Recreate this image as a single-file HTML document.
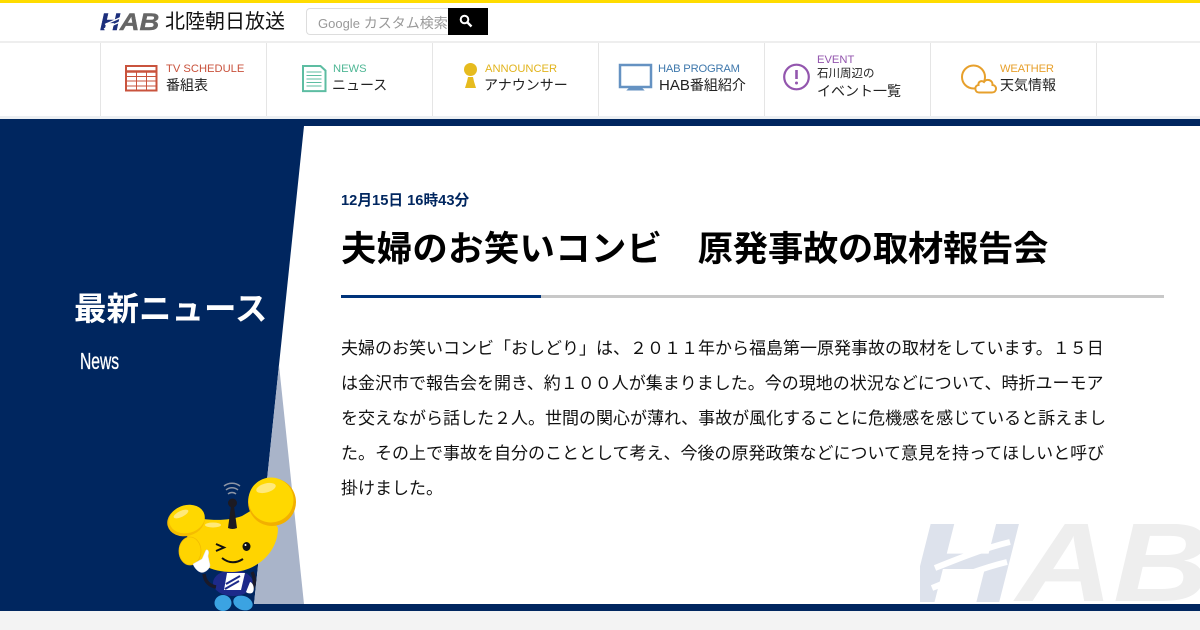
<!DOCTYPE html>
<html lang="ja">
<head>
<meta charset="utf-8">
<title>夫婦のお笑いコンビ　原発事故の取材報告会</title>
<style>
html,body{margin:0;padding:0;width:1200px;height:630px;overflow:hidden;background:#f3f3f3}
body{position:relative;font-family:"Liberation Sans","Noto Sans CJK JP",sans-serif;color:#000}
.a{position:absolute;white-space:nowrap}
.en{font-size:11.2px;line-height:14px}
.ja{font-size:14px;line-height:18px;color:#222}
</style>
</head>
<body>
<div class="a" style="left:0;top:0;width:1200px;height:3px;background:#ffdc00"></div>
<div class="a" style="left:0;top:3px;width:1200px;height:38px;background:#fff"></div>
<div class="a" style="left:0;top:41px;width:1200px;height:2px;background:#eee"></div>
<div class="a" style="left:0;top:43px;width:1200px;height:73px;background:#fff"></div>
<div class="a" style="left:0;top:116px;width:1200px;height:3px;background:#eceff2"></div>

<!-- logo -->
<div class="a" style="left:100px;top:9px;font:italic bold 24px/28px 'Liberation Sans',sans-serif;color:#1c2f7c;-webkit-text-stroke:.4px;transform:scaleX(1.140);transform-origin:0 0">H<span style="color:#666">AB</span></div>
<svg class="a" style="left:100px;top:12px" width="30" height="20" fill="none"><path d="M5 12.500L22 5M4 17L21 9.500" stroke="#fff" stroke-width="1.500"/></svg>
<div class="a" style="left:165px;top:9px;font-size:20px;line-height:26px;color:#111">北陸朝日放送</div>

<!-- search -->
<div class="a" style="left:306px;top:8px;width:142px;height:25px;border:1px solid #ddd;border-right:0;border-radius:4px 0 0 4px;background:#fff"></div>
<div class="a" style="left:318px;top:13px;width:130px;overflow:hidden;font-size:14px;line-height:20px;color:#999"><span style="font-size:13px">Google</span> カスタム検索</div>
<div class="a" style="left:448px;top:8px;width:40px;height:27px;background:#000"></div>
<svg class="a" style="left:458px;top:13px" width="16" height="16" viewBox="0 0 16 16"><circle cx="6.500" cy="6.500" r="3.800" fill="none" stroke="#fff" stroke-width="2"/><path d="M9.500 9.500L13.500 13.500" stroke="#fff" stroke-width="2.400"/></svg>

<!-- nav dividers -->
<div class="a" style="left:100px;top:43px;width:1px;height:73px;background:#e5e5e5"></div>
<div class="a" style="left:266px;top:43px;width:1px;height:73px;background:#e5e5e5"></div>
<div class="a" style="left:432px;top:43px;width:1px;height:73px;background:#e5e5e5"></div>
<div class="a" style="left:598px;top:43px;width:1px;height:73px;background:#e5e5e5"></div>
<div class="a" style="left:764px;top:43px;width:1px;height:73px;background:#e5e5e5"></div>
<div class="a" style="left:930px;top:43px;width:1px;height:73px;background:#e5e5e5"></div>
<div class="a" style="left:1096px;top:43px;width:1px;height:73px;background:#e5e5e5"></div>

<!-- nav icons -->
<svg class="a" style="left:0;top:0" width="1200" height="120" fill="none">
<g stroke="#c9533d"><rect x="126" y="66" width="30.500" height="24.500" stroke-width="2"/><path d="M126 71.500h30" stroke-width="2.500"/><path d="M126 76.500h30M126 81h30M126 86h30M136.500 72v18M146.500 72v18" stroke-width="1"/></g>
<g stroke="#5dbda2" stroke-width="2"><path d="M303 66h17.500l5 4.600v20.500H303z"/><path d="M306.500 72h15M306.500 75.500h15M306.500 79h15M306.500 82.500h15M306.500 86h15" stroke-width="1.100"/></g>
<circle cx="470.500" cy="69.500" r="6.500" fill="#e6bb1e"/><path d="M468 77h5l1 4.500 2 6.500h-11l2-6.500z" fill="#e6bb1e"/>
<g stroke="#6592c2"><rect x="620" y="65" width="31" height="22" stroke-width="2.500"/><path d="M629 88.500h13l1.500 1.500h-16z" fill="#6592c2" stroke-width="1"/></g>
<circle cx="796.500" cy="77" r="12.300" stroke="#9356ae" stroke-width="2.200"/><path d="M796.500 70v9" stroke="#9356ae" stroke-width="2.600"/><circle cx="796.500" cy="83" r="1.500" fill="#9356ae"/>
<g stroke="#e7a02c" stroke-width="2"><circle cx="973.500" cy="77" r="11.500"/><path d="M979 92.500h13c5 0 5.500-7 .5-7.500c.5-5-6-7-8.500-3c-3-2-6 0-5.500 3c-4.500 .5-4 7.500 .5 7.500z" fill="#fff"/></g>
</svg>

<!-- nav text -->
<div class="a en" style="left:166px;top:62px;color:#c9533d">TV SCHEDULE</div>
<div class="a ja" style="left:166px;top:76px">番組表</div>
<div class="a en" style="left:333px;top:62px;color:#4fb795">NEWS</div>
<div class="a ja" style="left:332px;top:76px">ニュース</div>
<div class="a en" style="left:485px;top:62px;color:#e2b41e">ANNOUNCER</div>
<div class="a ja" style="left:484px;top:76px">アナウンサー</div>
<div class="a en" style="left:658px;top:62px;color:#3f78ac;letter-spacing:-.2px">HAB PROGRAM</div>
<div class="a ja" style="left:659px;top:76px"><span style="font-size:15px">HAB</span>番組紹介</div>
<div class="a en" style="left:817px;top:53px;color:#9356ae">EVENT</div>
<div class="a" style="left:817px;top:67px;font-size:11.500px;line-height:15px;color:#222">石川周辺の</div>
<div class="a ja" style="left:817px;top:82px">イベント一覧</div>
<div class="a en" style="left:1000px;top:62px;color:#e7a02c;letter-spacing:-.2px">WEATHER</div>
<div class="a ja" style="left:1000px;top:76px">天気情報</div>

<!-- main -->
<div class="a" style="left:0;top:119px;width:1200px;height:492px;background:#00265f"></div>
<svg class="a" style="left:0;top:126px" width="1200" height="478">
<polygon points="304,0 1200,0 1200,478 254,478" fill="#fff"/>
<polygon points="279,239 304,478 254,478" fill="#a9b4c9"/>
</svg>

<!-- watermark -->
<div class="a" style="left:920px;top:524px;width:280px;height:80px;overflow:hidden">
<div class="a" style="left:-10px;top:-28px;font:italic bold 112px/134px 'Liberation Sans',sans-serif;color:#dde2ec;-webkit-text-stroke:2px #dde2ec;transform:scaleX(1.300);transform-origin:0 0">H</div>
<svg class="a" style="left:0;top:0" width="110" height="80" fill="none"><path d="M15 44C40 34 65 24 90 18M12 64C37 54 62 44 87 38" stroke="#fff" stroke-width="6"/></svg>
<div class="a" style="left:96px;top:-28px;font:italic bold 112px/134px 'Liberation Sans',sans-serif;color:#eeeeee;transform:scaleX(1.200);transform-origin:0 0">AB</div>
</div>

<!-- left heading -->
<div class="a" style="left:74px;top:288px;font-size:32.500px;line-height:42px;color:#fff;font-weight:bold">最新ニュース</div>
<div class="a" style="left:80px;top:347px;font-size:23px;line-height:28px;color:#fff;-webkit-text-stroke:.3px #fff;transform:scaleX(.68);transform-origin:0 0">News</div>

<!-- article -->
<div class="a" style="left:341px;top:191px;font-size:14.700px;line-height:20px;font-weight:bold;color:#00265f">12月15日 16時43分</div>
<div class="a" style="left:341px;top:227px;font-size:35.360px;line-height:46px;font-weight:bold;color:#000"><span style="letter-spacing:.35px">夫婦のお笑いコンビ</span>　<span style="letter-spacing:-.33px">原発事故の取材報告会</span></div>
<div class="a" style="left:341px;top:295px;width:823px;height:3px;background:#c8c8c8"></div>
<div class="a" style="left:341px;top:295px;width:200px;height:3px;background:#00337a"></div>
<div class="a" style="left:341px;top:331px;font-size:17px;line-height:35px;color:#111">夫婦のお笑いコンビ「おしどり」は、２０１１年から福島第一原発事故の取材をしています。１５日<br>は金沢市で報告会を開き、約１００人が集まりました。今の現地の状況などについて、時折ユーモア<br>を交えながら話した２人。世間の関心が薄れ、事故が風化することに危機感を感じていると訴えまし<br>た。その上で事故を自分のこととして考え、今後の原発政策などについて意見を持ってほしいと呼び<br>掛けました。</div>

<!-- mascot -->
<svg class="a" style="left:150px;top:470px" width="160" height="145" viewBox="0 0 160 145" fill="none">
<g stroke="#8d95a5" stroke-width="1.500"><path d="M78 24a6 6 0 0 1 8 0M76 20a9 9 0 0 1 12 0M74 16a13 13 0 0 1 16 0"/></g>
<ellipse cx="83" cy="113" rx="20" ry="13" fill="#1d2a8a"/>
<path d="M54 104c1 8 6 12 12 13M102 102c3 6 3 12 0 17" stroke="#1a1a2a" stroke-width="3.500"/>
<path d="M77 103h18l-4 17H74z" fill="#fff"/><path d="M76 114l14-8M75 119l14-8" stroke="#1d2a8a" stroke-width="2"/>
<path d="M100 112c4 1 5 9 2 11c-3 1-5 0-6-1z" fill="#fff"/>
<path d="M75 126v5M91 126v5" stroke="#111" stroke-width="4"/>
<ellipse cx="73" cy="133" rx="8.500" ry="8" fill="#3ba3e2"/><ellipse cx="93" cy="133" rx="10" ry="7" fill="#3ba3e2" transform="rotate(20 93 133)"/>
<path d="M40 47C56 50 76 52 92 46L112 34L128 58C128 84 104 102 82 102C62 102 44 94 36 75z" fill="#ffd400"/>
<ellipse cx="40" cy="81" rx="11" ry="14" fill="#ffd400" stroke="#f2bc00" stroke-width=".800"/>
<circle cx="122" cy="32" r="24" fill="#f2b000"/><circle cx="121" cy="30" r="22.500" fill="#ffd800"/>
<ellipse cx="116" cy="18" rx="10" ry="4.500" fill="#ffe97a" transform="rotate(-15 116 18)"/>
<ellipse cx="36" cy="51" rx="19" ry="15" fill="#f5bd00" transform="rotate(-15 36 51)"/><ellipse cx="37" cy="49" rx="18" ry="14" fill="#ffd800" transform="rotate(-15 37 49)"/>
<ellipse cx="31" cy="44" rx="8" ry="3" fill="#ffe97a" transform="rotate(-25 31 44)"/>
<ellipse cx="63" cy="55" rx="8" ry="2.500" fill="#ffe97a"/>
<path d="M78 58l3-22h3l3 22q-4.500 2-9 0z" fill="#1c1a22"/><circle cx="82.500" cy="33" r="4.500" fill="#1c1a22"/>
<path d="M66 74l8 3.500l-8 3.500" stroke="#111" stroke-width="2"/><ellipse cx="96.500" cy="76.500" rx="4" ry="4.500" fill="#111"/><circle cx="95.500" cy="75" r="1" fill="#fff"/>
<path d="M72 88q10 8 21 1" stroke="#111" stroke-width="2"/>
<path d="M43 94l9-5l4-9c3-1 3 3 2 6l2 9c0 4-6 9-10 7c-3-1-6-5-7-8z" fill="#fff" stroke="#dde" stroke-width=".500"/>
</svg>
</body>
</html>
